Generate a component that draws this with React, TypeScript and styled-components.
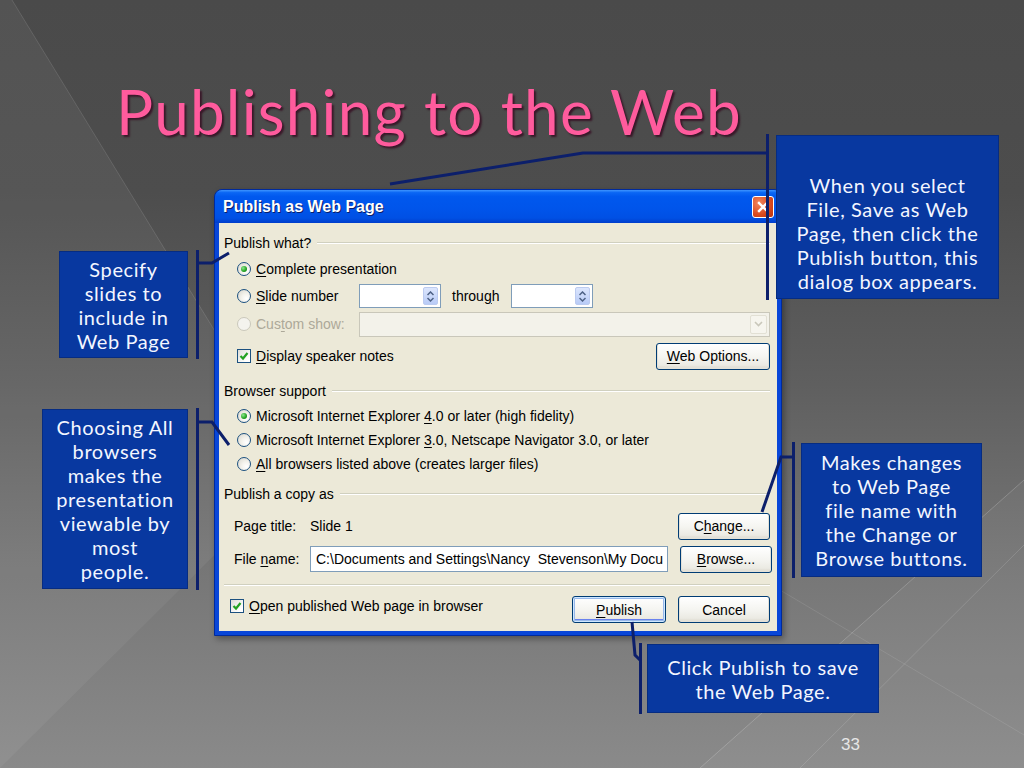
import React from "react";
import styled, { createGlobalStyle } from "styled-components";

const GlobalStyle = createGlobalStyle`
  html, body {
    margin: 0;
    padding: 0;
    background: #4b4b4b;
  }
  body {
    font-family: "Liberation Sans", Arial, sans-serif;
  }
`;

const NAVY = "#0c1f6b";

const Slide = styled.div`
  position: relative;
  width: 1024px;
  height: 768px;
  overflow: hidden;
  display: flex;
  flex-direction: column;
  background: linear-gradient(
    180deg,
    #4a4a4a 0%,
    #4d4d4d 25%,
    #5f5f5f 50%,
    #777777 75%,
    #8a8a8a 100%
  );
`;

const Backdrop = styled.svg`
  position: absolute;
  inset: 0;
  width: 100%;
  height: 100%;
`;

const Title = styled.h1`
  position: relative;
  margin: 0;
  padding: 76px 0 0 116px;
  font-family: Lato, "Open Sans", sans-serif;
  font-weight: 400;
  font-size: 62px;
  line-height: 70px;
  letter-spacing: 1.2px;
  color: #ff5b9d;
  text-shadow: 2px 2px 2px rgba(50, 0, 25, 0.7);
`;

const Stage = styled.div`
  position: relative;
  display: flex;
  margin-top: 43px;
  padding-left: 214px;
`;

const PageNumber = styled.div`
  position: relative;
  margin-top: auto;
  padding: 0 164px 13px 0;
  text-align: right;
  font-size: 17px;
  color: #e6e6e6;
`;

/* ---------- XP dialog ---------- */

const Dialog = styled.div`
  width: 568px;
  height: 447px;
  display: flex;
  flex-direction: column;
  box-sizing: border-box;
  padding: 0 4px 4px;
  background: #0846d8;
  border: 1px solid #002a9c;
  border-radius: 8px 8px 0 0;
  box-shadow: 2px 3px 6px rgba(0, 0, 0, 0.35);
`;

const TitleBar = styled.div`
  height: 33px;
  margin: 0 -4px;
  padding: 0 7px 0 8px;
  display: flex;
  align-items: center;
  justify-content: space-between;
  border-radius: 7px 7px 0 0;
  background: linear-gradient(
    180deg,
    #3d95ff 0%,
    #0a66f4 8%,
    #0058ee 20%,
    #0055eb 55%,
    #0050e4 85%,
    #003dcb 100%
  );
  color: #fff;
  font-weight: bold;
  font-size: 16px;
  text-shadow: 1px 1px 0 #0a1e6a;
`;

const CloseButton = styled.div`
  width: 22px;
  height: 22px;
  display: flex;
  align-items: center;
  justify-content: center;
  box-sizing: border-box;
  border: 1px solid #fff;
  border-radius: 3px;
  background: radial-gradient(circle at 30% 30%, #f0865e, #d9491e 60%, #b8330d);
`;

const Body = styled.div`
  flex: 1;
  display: flex;
  flex-direction: column;
  padding: 0 7px 0 5px;
  background: #ece9d8;
  color: #000;
  font-size: 14px;
`;

const GroupHeader = styled.div<{ $mt: number }>`
  height: 20px;
  margin-top: ${(p) => p.$mt}px;
  display: flex;
  align-items: center;
  gap: 6px;
  &::after {
    content: "";
    flex: 1;
    border-top: 1px solid #d0d0bf;
    border-bottom: 1px solid #fff;
  }
`;

const Row = styled.div<{ $mt: number; $h?: number; $indent?: number }>`
  height: ${(p) => p.$h ?? 26}px;
  margin-top: ${(p) => p.$mt}px;
  padding-left: ${(p) => p.$indent ?? 13}px;
  display: flex;
  align-items: center;
`;

const Option = styled.label<{ $w?: number; $disabled?: boolean; $lift?: number }>`
  display: flex;
  align-items: center;
  gap: 5px;
  flex: none;
  width: ${(p) => (p.$w ? `${p.$w}px` : "auto")};
  margin-bottom: ${(p) => p.$lift ?? 0}px;
  color: ${(p) => (p.$disabled ? "#aca899" : "#000")};
  white-space: nowrap;
`;

const Key = styled.u`
  text-underline-offset: 2px;
`;

const Radio = styled.span<{ $checked?: boolean; $disabled?: boolean }>`
  position: relative;
  width: 14px;
  height: 14px;
  flex: none;
  box-sizing: border-box;
  border-radius: 50%;
  border: 1px solid ${(p) => (p.$disabled ? "#cac8bb" : "#1c5180")};
  background: ${(p) =>
    p.$disabled
      ? "#f4f3ee"
      : "radial-gradient(circle at 70% 70%, #ffffff 0%, #f3f2ec 40%, #d6d4cb 100%)"};
  &::after {
    content: "";
    display: ${(p) => (p.$checked ? "block" : "none")};
    position: absolute;
    left: 3px;
    top: 3px;
    width: 6px;
    height: 6px;
    border-radius: 50%;
    background: radial-gradient(circle at 35% 35%, #8ee88e, #21a121 60%, #137313);
  }
`;

const CheckBox = styled.span`
  width: 14px;
  height: 14px;
  flex: none;
  box-sizing: border-box;
  border: 1px solid #1c5180;
  background: linear-gradient(135deg, #dcdcd7, #ffffff 80%);
  display: flex;
  align-items: center;
  justify-content: center;
`;

const Check = () => (
  <CheckBox>
    <svg width="10" height="10" viewBox="0 0 10 10">
      <polyline
        points="1.5,5 4,7.5 8.5,2"
        fill="none"
        stroke="#21a121"
        strokeWidth="2.2"
      />
    </svg>
  </CheckBox>
);

const Field = styled.div<{ $w: number; $h?: number }>`
  width: ${(p) => p.$w}px;
  height: ${(p) => p.$h ?? 24}px;
  flex: none;
  box-sizing: border-box;
  border: 1px solid #7f9db9;
  background: #fff;
  display: flex;
  align-items: center;
  justify-content: flex-end;
  padding: 2px;
  overflow: hidden;
`;

const FieldText = styled.span`
  flex: 1;
  min-width: 0;
  overflow: hidden;
  padding-left: 3px;
  white-space: pre;
`;

const SpinButtons = styled.div`
  width: 15px;
  height: 100%;
  display: flex;
  flex-direction: column;
  align-items: center;
  justify-content: center;
  gap: 1px;
  border-radius: 2px;
  border: 1px solid #bccbf0;
  box-sizing: border-box;
  background: linear-gradient(180deg, #dce6fd, #b8cbf7);
`;

const Spinner = () => (
  <Field $w={82}>
    <SpinButtons>
      <svg width="7" height="5" viewBox="0 0 7 5">
        <polyline points="0.5,4 3.5,1 6.5,4" fill="none" stroke="#4d6185" strokeWidth="1.5" />
      </svg>
      <svg width="7" height="5" viewBox="0 0 7 5">
        <polyline points="0.5,1 3.5,4 6.5,1" fill="none" stroke="#4d6185" strokeWidth="1.5" />
      </svg>
    </SpinButtons>
  </Field>
);

const Through = styled.span`
  width: 70px;
  padding-left: 11px;
  box-sizing: border-box;
`;

const Select = styled.div`
  flex: 1;
  height: 25px;
  box-sizing: border-box;
  border: 1px solid #c9c7ba;
  background: #f3f2ea;
  display: flex;
  justify-content: flex-end;
  padding: 2px;
`;

const SelectArrow = styled.div`
  width: 17px;
  box-sizing: border-box;
  border: 1px solid #e2e0d4;
  border-radius: 2px;
  background: #f6f5ee;
  display: flex;
  align-items: center;
  justify-content: center;
`;

const XPButton = styled.button<{ $w: number; $default?: boolean }>`
  width: ${(p) => p.$w}px;
  height: 27px;
  flex: none;
  margin-left: ${(p) => (p.$default ? "auto" : "12px")};
  padding: 0;
  border: 1px solid #003c74;
  border-radius: 3px;
  font-family: inherit;
  font-size: 14px;
  color: #000;
  background: linear-gradient(180deg, #ffffff 0%, #f5f5f1 50%, #ebeae3 85%, #d8d4c8 100%);
  box-shadow: ${(p) =>
    p.$default
      ? "inset 0 0 0 1px #cee7ff, inset 0 0 0 2px #98b8ea, inset 0 -1px 0 2px #6982ee"
      : "inset 0 -1px 0 1px #e3e1d8"};
`;

const PushRight = styled(XPButton)`
  margin-left: auto;
`;

const Label = styled.span<{ $w: number }>`
  width: ${(p) => p.$w}px;
  flex: none;
`;

const Separator = styled.div`
  margin-top: 12px;
  border-top: 1px solid #d0d0bf;
  border-bottom: 1px solid #fff;
`;

/* ---------- callouts ---------- */

const Callout = styled.div<{ $x: number; $y: number; $gap: number; $flip?: boolean }>`
  position: absolute;
  left: ${(p) => p.$x}px;
  top: ${(p) => p.$y}px;
  display: flex;
  flex-direction: ${(p) => (p.$flip ? "row-reverse" : "row")};
  gap: ${(p) => p.$gap}px;
`;

const Bracket = styled.div`
  width: 3px;
  background: ${NAVY};
`;

const Note = styled.div<{ $w: number; $h: number; $bottom?: boolean }>`
  width: ${(p) => p.$w}px;
  height: ${(p) => p.$h}px;
  margin: 2px 0;
  box-sizing: border-box;
  padding: ${(p) => (p.$bottom ? "0 2px 5px" : "0 2px")};
  display: flex;
  flex-direction: column;
  justify-content: ${(p) => (p.$bottom ? "flex-end" : "center")};
  background: #0838a0;
  box-shadow: 0 0 0 1px #062c82;
  color: #f3f6ff;
  font-family: Lato, "Open Sans", sans-serif;
  font-weight: 400;
  font-size: 20px;
  letter-spacing: 0.6px;
  line-height: 24px;
  text-align: center;
  white-space: pre-line;
`;

const Overlay = styled.svg`
  position: absolute;
  inset: 0;
  width: 100%;
  height: 100%;
  pointer-events: none;
`;

const notes = [
  {
    x: 766, y: 134, w: 221, h: 162, gap: 8, flip: false, bottom: true,
    text: "When you select\nFile, Save as Web\nPage, then click the\nPublish button, this\ndialog box appears.",
  },
  { x: 60, y: 250, w: 127, h: 105, gap: 9, flip: true, text: "Specify\nslides to\ninclude in\nWeb Page" },
  {
    x: 43, y: 408, w: 144, h: 178, gap: 9, flip: true,
    text: "Choosing All\nbrowsers\nmakes the\npresentation\nviewable by\nmost\npeople.",
  },
  {
    x: 792, y: 442, w: 179, h: 132, gap: 7, flip: false,
    text: "Makes changes\nto Web Page\nfile name with\nthe Change or\nBrowse buttons.",
  },
  { x: 639, y: 643, w: 230, h: 67, gap: 6, flip: false, text: "Click Publish to save\nthe Web Page." },
];

const connectors = [
  "767,153 583,153 390,184",
  "198,263 212,263 229,253",
  "198,422 212,422 229,445",
  "792,457 781,457 762,512",
  "632,622 635,655 640,660",
];

export default function App() {
  return (
    <Slide>
      <GlobalStyle />
      <Backdrop viewBox="0 0 1024 768">
        <polygon points="0,0 12,0 300,470 0,768" fill="#ffffff" opacity="0.05" />
        <line x1="12" y1="0" x2="300" y2="470" stroke="#ffffff" strokeOpacity="0.12" />
        <polygon points="1024,480 700,768 1024,768" fill="#ffffff" opacity="0.04" />
        <line x1="700" y1="768" x2="1024" y2="480" stroke="#ffffff" strokeOpacity="0.2" />
        <line x1="800" y1="768" x2="1024" y2="545" stroke="#ffffff" strokeOpacity="0.14" />
        <line x1="780" y1="590" x2="1024" y2="735" stroke="#ffffff" strokeOpacity="0.1" />
      </Backdrop>

      <Title>Publishing to the Web</Title>

      <Stage>
        <Dialog>
          <TitleBar>
            <span>Publish as Web Page</span>
            <CloseButton>
              <svg width="12" height="12" viewBox="0 0 12 12">
                <path d="M2 2 L10 10 M10 2 L2 10" stroke="#fff" strokeWidth="2.4" strokeLinecap="square" />
              </svg>
            </CloseButton>
          </TitleBar>
          <Body>
            <GroupHeader $mt={10}>Publish what?</GroupHeader>
            <Row $mt={3}>
              <Option>
                <Radio $checked />
                <span><Key>C</Key>omplete presentation</span>
              </Option>
            </Row>
            <Row $mt={1}>
              <Option $w={122}>
                <Radio />
                <span><Key>S</Key>lide number</span>
              </Option>
              <Spinner />
              <Through>throu<Key>g</Key>h</Through>
              <Spinner />
            </Row>
            <Row $mt={2}>
              <Option $w={122} $disabled>
                <Radio $disabled />
                <span>Cus<Key>t</Key>om show:</span>
              </Option>
              <Select>
                <SelectArrow>
                  <svg width="9" height="6" viewBox="0 0 9 6">
                    <polyline points="1,1 4.5,4.5 8,1" fill="none" stroke="#c9c7ba" strokeWidth="1.6" />
                  </svg>
                </SelectArrow>
              </Select>
            </Row>
            <Row $mt={6}>
              <Option>
                <Check />
                <span><Key>D</Key>isplay speaker notes</span>
              </Option>
              <PushRight $w={114}><Key>W</Key>eb Options...</PushRight>
            </Row>

            <GroupHeader $mt={12}>Browser support</GroupHeader>
            <Row $mt={3} $h={24}>
              <Option>
                <Radio $checked />
                <span>Microsoft Internet Explorer <Key>4</Key>.0 or later (high fidelity)</span>
              </Option>
            </Row>
            <Row $mt={0} $h={24}>
              <Option>
                <Radio />
                <span>Microsoft Internet Explorer <Key>3</Key>.0, Netscape Navigator 3.0, or later</span>
              </Option>
            </Row>
            <Row $mt={0} $h={24}>
              <Option>
                <Radio />
                <span><Key>A</Key>ll browsers listed above (creates larger files)</span>
              </Option>
            </Row>

            <GroupHeader $mt={8}>Publish a copy as</GroupHeader>
            <Row $mt={9} $indent={10}>
              <Label $w={76}>Page title:</Label>
              <span>Slide 1</span>
              <PushRight $w={92}>C<Key>h</Key>ange...</PushRight>
            </Row>
            <Row $mt={7} $indent={10}>
              <Label $w={76}>File <Key>n</Key>ame:</Label>
              <Field $w={358} $h={26}>
                <FieldText>C:\Documents and Settings\Nancy  Stevenson\My Docu</FieldText>
              </Field>
              <XPButton $w={92}><Key>B</Key>rowse...</XPButton>
            </Row>
            <Separator />
            <Row $mt={10} $h={27} $indent={6}>
              <Option $lift={8}>
                <Check />
                <span><Key>O</Key>pen published Web page in browser</span>
              </Option>
              <XPButton $w={94} $default><Key>P</Key>ublish</XPButton>
              <XPButton $w={92}>Cancel</XPButton>
            </Row>
          </Body>
        </Dialog>
      </Stage>

      <PageNumber>33</PageNumber>

      <Overlay viewBox="0 0 1024 768">
        {connectors.map((pts) => (
          <polyline key={pts} points={pts} fill="none" stroke={NAVY} strokeWidth="3" />
        ))}
      </Overlay>

      {notes.map((n) => (
        <Callout key={n.text} $x={n.x} $y={n.y} $gap={n.gap} $flip={n.flip}>
          <Bracket />
          <Note $w={n.w} $h={n.h} $bottom={n.bottom}>
            {n.text}
          </Note>
        </Callout>
      ))}
    </Slide>
  );
}
